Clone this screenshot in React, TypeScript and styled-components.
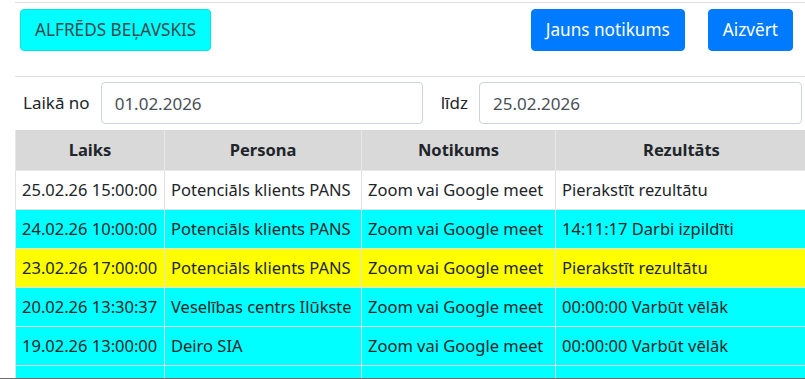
import styled, { createGlobalStyle } from "styled-components";

const GlobalStyle = createGlobalStyle`
  html, body {
    margin: 0;
    padding: 0;
    background: #ffffff;
  }
  body {
    font-family: "Noto Sans", "Liberation Sans", sans-serif;
    font-size: 17px;
    line-height: 26px;
    color: #212529;
  }
`;

type Row = {
  time: string;
  person: string;
  event: string;
  result: string;
  tone: "white" | "cyan" | "yellow";
};

const ROWS: Row[] = [
  { time: "25.02.26 15:00:00", person: "Potenciāls klients PANS", event: "Zoom vai Google meet", result: "Pierakstīt rezultātu", tone: "white" },
  { time: "24.02.26 10:00:00", person: "Potenciāls klients PANS", event: "Zoom vai Google meet", result: "14:11:17 Darbi izpildīti", tone: "cyan" },
  { time: "23.02.26 17:00:00", person: "Potenciāls klients PANS", event: "Zoom vai Google meet", result: "Pierakstīt rezultātu", tone: "yellow" },
  { time: "20.02.26 13:30:37", person: "Veselības centrs Ilūkste", event: "Zoom vai Google meet", result: "00:00:00 Varbūt vēlāk", tone: "cyan" },
  { time: "19.02.26 13:00:00", person: "Deiro SIA", event: "Zoom vai Google meet", result: "00:00:00 Varbūt vēlāk", tone: "cyan" },
  { time: "17.02.26 12:10:10", person: "Potenciāls klients PANS", event: "Nepieciešams", result: "00:00:00 Darbi izpildīti", tone: "cyan" },
];

const TONES = {
  white: "#ffffff",
  cyan: "#00ffff",
  yellow: "#ffff00",
};

const Page = styled.div`
  height: 378px;
  overflow: hidden;
  border-bottom: 1px solid #6b6b6b;
  padding-left: 15px;
`;

const Header = styled.div`
  display: flex;
  align-items: center;
  gap: 23px;
  border-top: 1px solid #dedede;
  margin-top: 2px;
  padding: 6px 12px 25px 5px;
  border-bottom: 1px solid #dee2e6;
`;

const Spacer = styled.div`
  flex: 1;
`;

const Button = styled.button<{ $variant: "cyan" | "primary" }>`
  font-family: inherit;
  font-size: 17.2px;
  line-height: 26px;
  height: 42px;
  padding: 0 14px;
  border-radius: 4px;
  border: 1px solid ${(p) => (p.$variant === "cyan" ? "#00e6e6" : "#007bff")};
  background: ${(p) => (p.$variant === "cyan" ? "#00ffff" : "#007bff")};
  color: ${(p) => (p.$variant === "cyan" ? "#3a4a4f" : "#ffffff")};
  cursor: pointer;
`;

const Filters = styled.div`
  display: flex;
  align-items: center;
  padding: 5px 3px 6px 8px;
`;

const Label = styled.label`
  color: #212529;
  margin-right: 11px;
  white-space: nowrap;
`;

const DateInput = styled.input<{ $width: number }>`
  width: ${(p) => p.$width}px;
  box-sizing: border-box;
  height: 42px;
  padding: 6px 13px;
  font-family: inherit;
  font-size: 17px;
  color: #495057;
  border: 1px solid #ced4da;
  border-radius: 4px;
  margin-right: 18px;
  &:last-child {
    margin-right: 0;
  }
`;

const Table = styled.table`
  border-collapse: collapse;
  table-layout: fixed;
  width: 792px;
  font-size: 16.5px;
`;

const Th = styled.th`
  background: #d9d9d9;
  font-weight: 700;
  height: 40px;
  padding: 0 6px;
  border: 1px solid #e8e8e8;
  border-top: none;
  text-align: center;
  white-space: nowrap;
`;

const Tr = styled.tr<{ $tone: Row["tone"] }>`
  background: ${(p) => TONES[p.$tone]};
`;

const Td = styled.td`
  height: 38px;
  padding: 0 6px;
  border: 1px solid #dee2e6;
  white-space: nowrap;
  overflow: hidden;
`;

export default function App() {
  return (
    <>
      <GlobalStyle />
      <Page>
        <Header>
          <Button $variant="cyan">ALFRĒDS BEĻAVSKIS</Button>
          <Spacer />
          <Button $variant="primary">Jauns notikums</Button>
          <Button $variant="primary">Aizvērt</Button>
        </Header>
        <Filters>
          <Label>Laikā no</Label>
          <DateInput $width={323} defaultValue="01.02.2026" />
          <Label>līdz</Label>
          <DateInput $width={324} defaultValue="25.02.2026" />
        </Filters>
        <Table>
          <colgroup>
            <col style={{ width: 149 }} />
            <col style={{ width: 197 }} />
            <col style={{ width: 194 }} />
            <col style={{ width: 252 }} />
          </colgroup>
          <thead>
            <tr>
              <Th>Laiks</Th>
              <Th>Persona</Th>
              <Th>Notikums</Th>
              <Th>Rezultāts</Th>
            </tr>
          </thead>
          <tbody>
            {ROWS.map((r) => (
              <Tr key={r.time} $tone={r.tone}>
                <Td>{r.time}</Td>
                <Td>{r.person}</Td>
                <Td>{r.event}</Td>
                <Td>{r.result}</Td>
              </Tr>
            ))}
          </tbody>
        </Table>
      </Page>
    </>
  );
}
